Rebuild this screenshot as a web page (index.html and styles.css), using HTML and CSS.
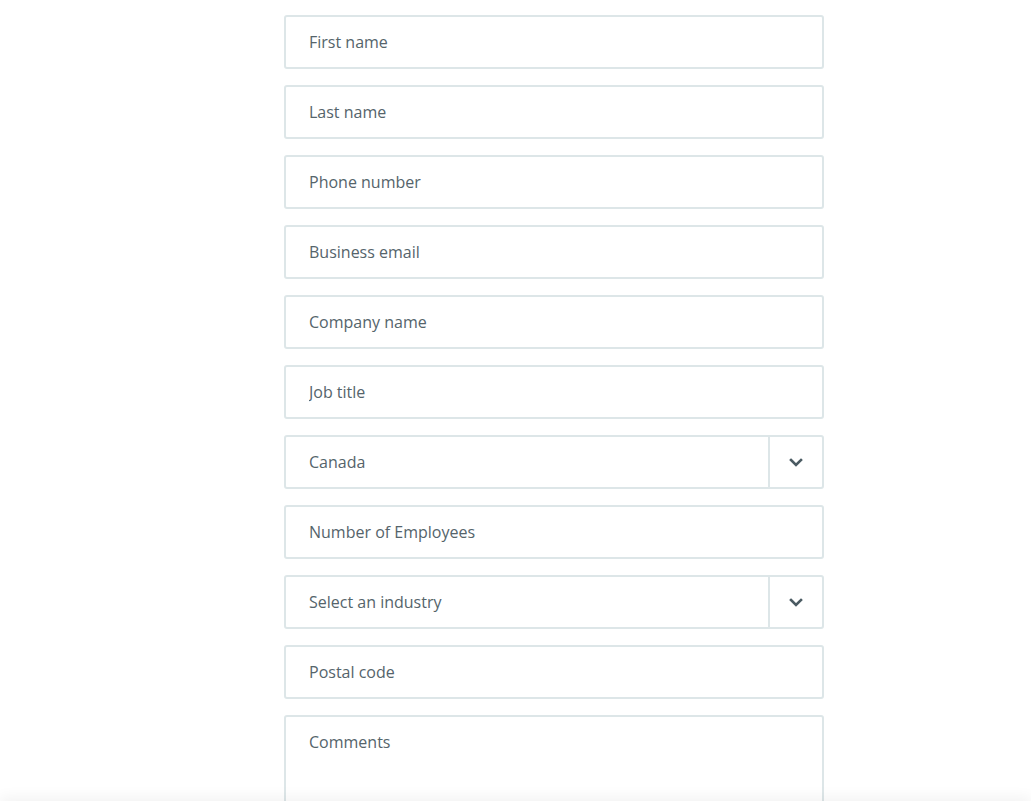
FILE: index.html
```html
<!DOCTYPE html>
<html lang="en">
<head>
    <meta charset="UTF-8">
    <meta name="viewport" content="width=device-width, initial-scale=1.0">
    <title>Contact sales</title>
    <link rel="stylesheet" href="styles.css">
</head>
<body>

    <form class="lead-form">
        <div class="field"><input type="text" placeholder="First name"></div>
        <div class="field"><input type="text" placeholder="Last name"></div>
        <div class="field"><input type="tel" placeholder="Phone number"></div>
        <div class="field"><input type="email" placeholder="Business email"></div>
        <div class="field"><input type="text" placeholder="Company name"></div>
        <div class="field"><input type="text" placeholder="Job title"></div>
        <div class="field select">
            <span class="select-value">Canada</span>
            <span class="select-arrow">
                <svg width="14" height="9" viewBox="0 0 14 9"><path d="M2 2l5 5 5-5" fill="none" stroke="#4b5b63" stroke-width="2.6" stroke-linecap="square"/></svg>
            </span>
        </div>
        <div class="field"><input type="text" placeholder="Number of Employees"></div>
        <div class="field select">
            <span class="select-value">Select an industry</span>
            <span class="select-arrow">
                <svg width="14" height="9" viewBox="0 0 14 9"><path d="M2 2l5 5 5-5" fill="none" stroke="#4b5b63" stroke-width="2.6" stroke-linecap="square"/></svg>
            </span>
        </div>
        <div class="field"><input type="text" placeholder="Postal code"></div>
        <div class="field textarea"><textarea placeholder="Comments"></textarea></div>
    </form>

    <div class="bottom-shade"></div>

</body>
</html>
```

FILE: styles.css
```css
* {
    margin: 0;
    padding: 0;
    box-sizing: border-box;
}

body {
    background-color: #ffffff;
    color: #55646b;
    font-family: "Open Sans", Arial, sans-serif;
    overflow: hidden;
    height: 801px;
}

.lead-form {
    width: 540px;
    margin: 15px 0 0 284px;
    display: flex;
    flex-direction: column;
    gap: 16px;
}

.field {
    height: 54px;
    border: 2px solid #dde6e8;
    border-radius: 3px;
    background: #fff;
    display: flex;
    align-items: center;
}

.field input,
.field textarea {
    width: 100%;
    height: 100%;
    border: none;
    outline: none;
    background: transparent;
    font: inherit;
    font-size: 16px;
    color: #55646b;
    padding: 0 23px;
}

.field input::placeholder,
.field textarea::placeholder {
    color: #55646b;
    opacity: 1;
}

.select-value {
    flex: 1;
    padding: 0 23px;
    font-size: 16px;
}

.select-arrow {
    width: 54px;
    height: 100%;
    border-left: 2px solid #dde6e8;
    display: flex;
    align-items: center;
    justify-content: center;
}

.select-arrow svg {
    display: block;
}

.field.textarea {
    height: 130px;
    align-items: stretch;
}

.field textarea {
    resize: none;
    padding: 15px 23px;
    line-height: 20px;
}

/* faint shadow of the bar below the fold */
.bottom-shade {
    position: fixed;
    left: 0;
    right: 0;
    bottom: -20px;
    height: 20px;
    box-shadow: 0 -4px 14px rgba(0, 0, 0, 0.05);
}
```
